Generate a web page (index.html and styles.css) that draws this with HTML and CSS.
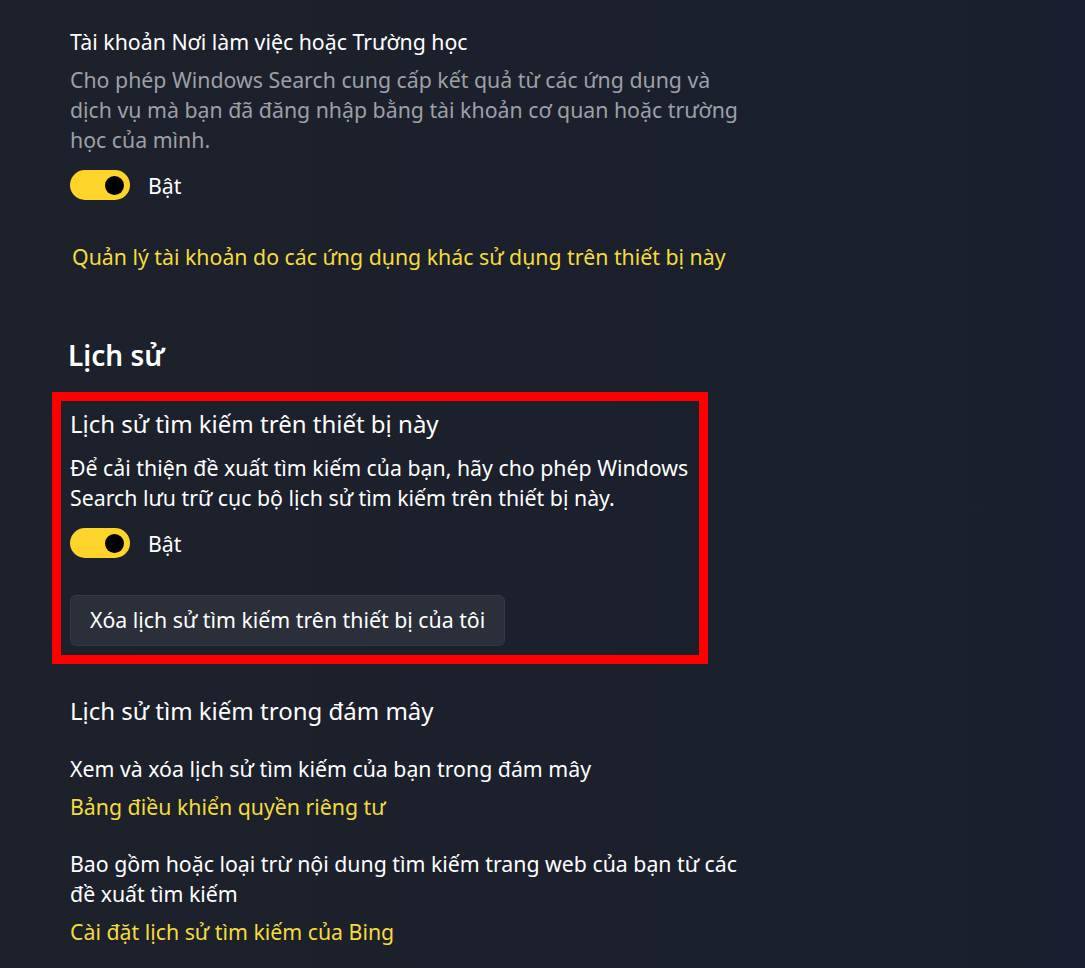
FILE: index.html
```html
<!DOCTYPE html>
<html lang="vi">
<head>
<meta charset="utf-8">
<title>Tìm kiếm</title>
<link rel="stylesheet" href="styles.css">
</head>
<body>
<main class="page">
  <section class="group first">
    <div class="title">Tài khoản Nơi làm việc hoặc Trường học</div>
    <p class="desc muted">Cho phép Windows Search cung cấp kết quả từ các ứng dụng và dịch vụ mà bạn đã đăng nhập bằng tài khoản cơ quan hoặc trường học của mình.</p>
    <div class="toggle-row">
      <span class="toggle"><span class="knob"></span></span>
      <span class="toggle-label">Bật</span>
    </div>
    <a class="link manage" href="#">Quản lý tài khoản do các ứng dụng khác sử dụng trên thiết bị này</a>
  </section>

  <h2 class="heading">Lịch sử</h2>

  <section class="highlight">
    <div class="title big">Lịch sử tìm kiếm trên thiết bị này</div>
    <p class="desc box-desc">Để cải thiện đề xuất tìm kiếm của bạn, hãy cho phép Windows Search lưu trữ cục bộ lịch sử tìm kiếm trên thiết bị này.</p>
    <div class="toggle-row">
      <span class="toggle"><span class="knob"></span></span>
      <span class="toggle-label">Bật</span>
    </div>
    <button class="btn" type="button">Xóa lịch sử tìm kiếm trên thiết bị của tôi</button>
  </section>

  <section class="group cloud">
    <div class="title big">Lịch sử tìm kiếm trong đám mây</div>
    <p class="desc item">Xem và xóa lịch sử tìm kiếm của bạn trong đám mây</p>
    <a class="link" href="#">Bảng điều khiển quyền riêng tư</a>
    <p class="desc item wide">Bao gồm hoặc loại trừ nội dung tìm kiếm trang web của bạn từ các đề xuất tìm kiếm</p>
    <a class="link" href="#">Cài đặt lịch sử tìm kiếm của Bing</a>
  </section>
</main>
</body>
</html>
```

FILE: styles.css
```css
* { box-sizing: border-box; }

html, body {
  margin: 0;
  padding: 0;
  height: 100%;
}

body {
  background: linear-gradient(90deg, #1c212b 0%, #1b202c 55%, #1a1f2f 100%);
  color: #ffffff;
  font-family: "Noto Sans", "Open Sans", sans-serif;
  font-size: 21.3px;
  line-height: 30px;
  overflow: hidden;
}

.page {
  padding: 27px 0 0 70px;
  width: 780px;
}

.group {
  display: flex;
  flex-direction: column;
  align-items: flex-start;
}

.title {
  font-size: 21.3px;
  line-height: 30px;
  color: #ffffff;
}

.title.big {
  font-size: 24px;
}

.desc {
  margin: 8px 0 0;
  width: 685px;
  color: #ffffff;
}

.muted {
  color: #9da0a6;
}

.toggle-row {
  display: flex;
  align-items: center;
  gap: 18px;
  margin-top: 15px;
  height: 30px;
}

.toggle {
  display: flex;
  align-items: center;
  justify-content: flex-end;
  width: 60px;
  height: 30px;
  border-radius: 15px;
  background: #ffd42a;
  padding-right: 6px;
}

.knob {
  width: 19px;
  height: 19px;
  border-radius: 50%;
  background: #000000;
}

.toggle-label {
  color: #ffffff;
  padding-top: 2px;
}

.link {
  color: #f6dc3b;
  text-decoration: none;
}

.manage {
  margin: 42px 0 0 2px;
}

.heading {
  margin: 63px 0 0 -2px;
  font-size: 28px;
  line-height: 40px;
  font-weight: 600;
}

.highlight {
  margin: 17px 0 0 -18px;
  width: 656px;
  border: 9px solid #ff0000;
  padding: 8px 0 9px 9px;
  display: flex;
  flex-direction: column;
  align-items: flex-start;
}

.box-desc {
  margin-top: 14px;
  width: 630px;
}

.btn {
  margin-top: 37px;
  height: 51px;
  padding: 0 19px 2px;
  font-family: inherit;
  font-size: 21.3px;
  color: #ffffff;
  background: #2a2f39;
  border: 1px solid #323742;
  border-top-color: #363b46;
  border-radius: 6px;
}

.cloud {
  margin-top: 32px;
}

.item {
  margin-top: 28px;
}

.cloud .link {
  margin-top: 8px;
}

.wide {
  margin-top: 27px;
  width: 680px;
}
```
